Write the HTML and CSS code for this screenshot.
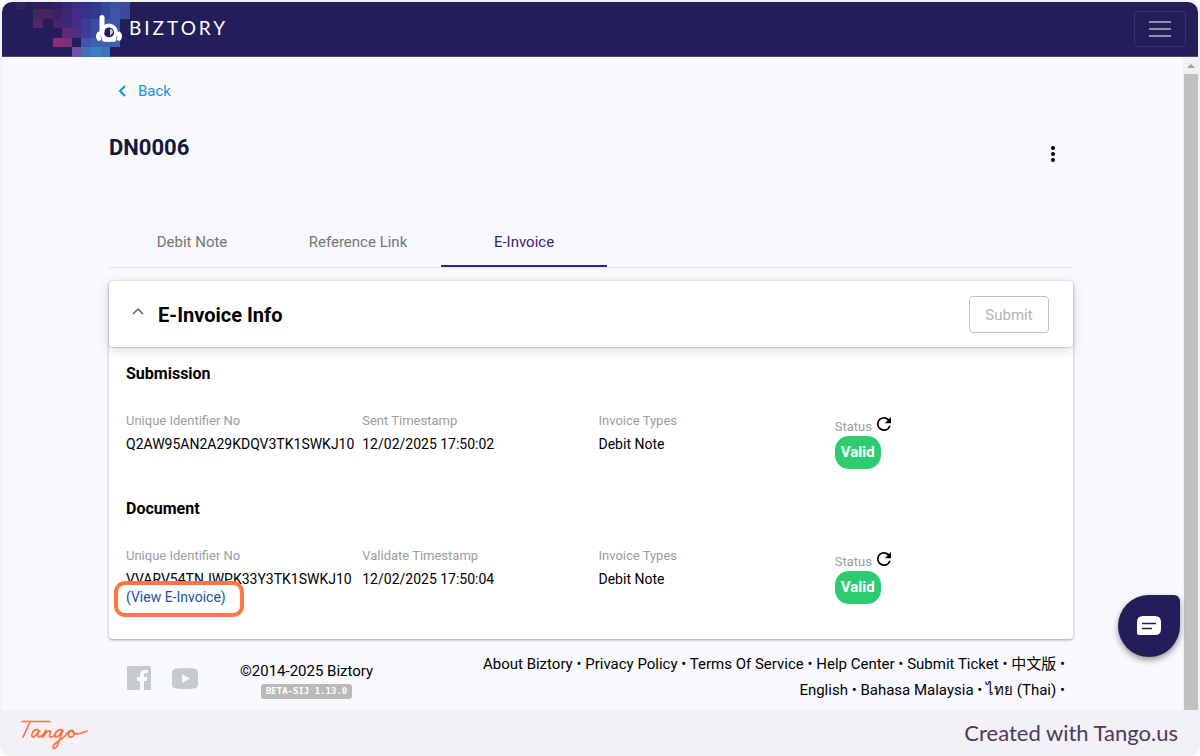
FILE: index.html
```html
<!DOCTYPE html>
<html lang="en">
<head>
<meta charset="utf-8">
<title>DN0006 - Biztory</title>
<link rel="stylesheet" href="styles.css">
</head>
<body>
<div class="frame">
  <div class="app">
    <header class="topbar">
      <a class="brand" href="#" aria-label="Biztory home">
        <svg class="mosaic" width="130" height="55" viewBox="2 2 130 55" aria-hidden="true" shape-rendering="crispEdges">
          <path fill="#2f2563" d="M15 2h10v7H15z"/>
          <path fill="#29215f" d="M33 2h20v7H33z"/>
          <path fill="#2c2265" d="M53 2h9v7h-9z"/>
          <path fill="#34267a" d="M62 2h10v7H62z"/>
          <path fill="#3a2c85" d="M72 2h9v7h-9z"/>
          <path fill="#34308c" d="M81 2h10v7H81z"/>
          <path fill="#2f3a8e" d="M91 2h10v17H91z"/>
          <path fill="#34489b" d="M101 2h9v17h-9z"/>
          <path fill="#434fa6" d="M110 2h10v7h-10z"/>
          <path fill="#3b4a9c" d="M120 2h10v17h-10z"/>
          <path fill="#3c55a8" d="M110 9h10v10h-10z"/>
          <path fill="#44255f" d="M33 9h20v10H33z"/>
          <path fill="#37235f" d="M53 9h9v10h-9z"/>
          <path fill="#3f2773" d="M62 9h10v19H62z"/>
          <path fill="#452d83" d="M72 9h9v19h-9z"/>
          <path fill="#38328c" d="M81 9h10v10H81z"/>
          <path fill="#522662" d="M33 19h10v9H33z"/>
          <path fill="#4a2468" d="M53 19h9v9h-9z"/>
          <path fill="#3c3b96" d="M81 19h10v19H81z"/>
          <path fill="#3b4ba0" d="M91 19h10v19H91z"/>
          <path fill="#3b56a8" d="M101 19h19v19h-19z"/>
          <path fill="#612974" d="M62 28h10v10H62z"/>
          <path fill="#4f2d86" d="M72 28h9v10h-9z"/>
          <path fill="#8e2a78" d="M53 38h9v9h-9z"/>
          <path fill="#7f2d7f" d="M62 38h10v9H62z"/>
          <path fill="#3f55a5" d="M81 38h10v9H81z"/>
          <path fill="#3e62b0" d="M91 38h29v9H91z"/>
          <path fill="#6f50a6" d="M72 47h9v10h-9z"/>
          <path fill="#4270b4" d="M81 47h10v10H81z"/>
          <path fill="#3b80c0" d="M91 47h10v10H91z"/>
          <path fill="#3b76b9" d="M101 47h9v10h-9z"/>
        </svg>
        <svg class="mark" width="28" height="28" viewBox="0 0 28 28" aria-hidden="true">
          <circle cx="14" cy="18.500" r="6" fill="#231e5a"/>
          <g fill="none" stroke="#fff" stroke-linecap="round">
            <path stroke-width="5" d="M7 3.500V18"/>
            <circle cx="14" cy="18.500" r="7" stroke-width="4"/>
            <path stroke-width="4.500" d="M4 20Q2.500 22 4 24.500M24 20Q25.500 22 24 24.500M9 25.500H19"/>
          </g>
          <path fill="#b9cdec" d="M15 14.500q3 1 3 4l-3 3.500z"/>
        </svg>
        <span class="wordmark">BIZTORY</span>
      </a>
      <button class="menu-button" type="button" aria-label="Open menu"><span></span><span></span><span></span></button>
    </header>
    <div class="viewport">
      <main class="content">
        <a class="back" href="#"><svg width="8" height="12" viewBox="0 0 8 12" aria-hidden="true"><path d="M7 1L2 6l5 5" fill="none" stroke="currentColor" stroke-width="2"/></svg>Back</a>
        <div class="title-row">
          <h1>DN0006</h1>
          <button class="more" type="button" aria-label="More actions"><i></i><i></i><i></i></button>
        </div>
        <nav class="tabs">
          <a class="tab" href="#">Debit Note</a>
          <a class="tab" href="#">Reference Link</a>
          <a class="tab tab-active" href="#">E-Invoice</a>
        </nav>
        <section class="card">
          <div class="card-head">
            <svg width="12" height="8" viewBox="0 0 12 8" aria-hidden="true"><path d="M1 7l5-5 5 5" fill="none" stroke="#666" stroke-width="1.500"/></svg>
            <h2>E-Invoice Info</h2>
            <button class="submit" type="button" disabled>Submit</button>
          </div>
          <div class="card-body">
            <h3>Submission</h3>
            <dl class="fields">
              <div><dt>Unique Identifier No</dt><dd>Q2AW95AN2A29KDQV3TK1SWKJ10</dd></div>
              <div><dt>Sent Timestamp</dt><dd>12/02/2025 17:50:02</dd></div>
              <div><dt>Invoice Types</dt><dd>Debit Note</dd></div>
              <div class="status"><dt>Status <button type="button" class="refresh" aria-label="Refresh status"><svg width="14" height="14" viewBox="4 4 16 16" aria-hidden="true"><path d="M17.650 6.350A7.960 7.960 0 0 0 12 4a8 8 0 1 0 7.730 10h-2.080A6 6 0 1 1 12 6c1.660 0 3.140.690 4.220 1.780L13 11h7V4z"/></svg></button></dt><dd><span class="pill">Valid</span></dd></div>
            </dl>
            <h3>Document</h3>
            <dl class="fields">
              <div><dt>Unique Identifier No</dt><dd>VVARV54TNJWPK33Y3TK1SWKJ10<br><span class="link-spot"><a href="#">(View E-Invoice)</a></span></dd></div>
              <div><dt>Validate Timestamp</dt><dd>12/02/2025 17:50:04</dd></div>
              <div><dt>Invoice Types</dt><dd>Debit Note</dd></div>
              <div class="status"><dt>Status <button type="button" class="refresh" aria-label="Refresh status"><svg width="14" height="14" viewBox="4 4 16 16" aria-hidden="true"><path d="M17.650 6.350A7.960 7.960 0 0 0 12 4a8 8 0 1 0 7.730 10h-2.080A6 6 0 1 1 12 6c1.660 0 3.140.690 4.220 1.780L13 11h7V4z"/></svg></button></dt><dd><span class="pill">Valid</span></dd></div>
            </dl>
          </div>
        </section>
        <footer class="site-footer">
          <div class="social">
            <a href="#" aria-label="Facebook"><svg width="24" height="24" viewBox="0 0 24 24"><path fill="#c5cad1" d="M1 0h22a1 1 0 0 1 1 1v22a1 1 0 0 1-1 1h-6v-9h3l.500-4H17V9q0-2 2-2h2V4h-3q-5 0-5 5v2h-3v4h3v9H1a1 1 0 0 1-1-1V1a1 1 0 0 1 1-1z"/></svg></a>
            <a href="#" aria-label="YouTube"><svg width="26" height="21" viewBox="0 0 26 21"><path fill="#c5cad1" fill-rule="evenodd" d="M4 .500Q13-.500 22 .500q4 .500 4 4.500v11q0 4-4 4.500-9 1-18 0Q0 20 0 16V5Q0 1 4 .500zM10 6v9l8-4.500z"/></svg></a>
          </div>
          <div class="copyright"><span>©2014-2025 Biztory</span><span class="version">BETA-SIJ 1.13.0</span></div>
          <p class="links"><a href="#">About Biztory</a> • <a href="#">Privacy Policy</a> • <a href="#">Terms Of Service</a> • <a href="#">Help Center</a> • <a href="#">Submit Ticket</a> • <a href="#" lang="zh">中文版</a> • <a href="#">English</a> • <a href="#">Bahasa Malaysia</a> • <a href="#" lang="th">ไทย (Thai)</a> •</p>
        </footer>
      </main>
      <div class="scrollbar" aria-hidden="true"><span class="scroll-up"></span><span class="scroll-thumb"></span></div>
      <button class="chat" type="button" aria-label="Open chat"><svg width="24" height="20" viewBox="0 0 24 20" aria-hidden="true"><path fill="#fff" d="M6 0h12q6 0 6 6v7q0 6-6 6H2q-2 0-2-2V6q0-6 6-6z"/><path d="M5 7.500h14M5 12.500h10" stroke="#231e5a" stroke-width="1.500"/></svg></button>
    </div>
  </div>
  <div class="credit">
    <svg width="68" height="30" viewBox="0 0 68 30" role="img" aria-label="Tango"><path d="M1 1.500H29M9 2L2 17M19 11c-3-3-7-1-8 3s2 4 4 1l3-4c-2 4-2 6 0 6 3 0 5-3 7-7l-3 7c3-5 5-7 7-6s-2 5 0 6 5-2 6-4c1-3 5-4 7-2M42 11c-3-3-7 0-8 3-1 4 3 4 5 0l3-4-5 14c-1 4-5 6-5 3 0-4 8-6 13-12 2-4 5-5 7-4 3 2 0 7-3 6s-1-6 2-7c1 5 6 5 15 1" fill="none" stroke="#ff7240" stroke-width="1.700" stroke-linecap="round" stroke-linejoin="round"/></svg>
    <span>Created with Tango.us</span>
  </div>
</div>
</body>
</html>
```
FILE: styles.css
```css
* { box-sizing: border-box; }
body { margin: 0; background: #fff; font-family: Roboto, "Noto Sans CJK SC", sans-serif; font-size: 15px; line-height: 20px; color: #000; }
h1, h2, h3, p, dl, dd { margin: 0; }
a { color: inherit; text-decoration: none; }
button { font: inherit; margin: 0; }
.frame { min-height: 100vh; display: flex; flex-direction: column; background: #f3f1f6; border-radius: 10px; padding: 2px 2px 0; }
.app { flex: 1; display: flex; flex-direction: column; border-radius: 10px 10px 0 0; overflow: hidden; background: #f8f9fd; }
.topbar { height: 55px; display: flex; align-items: center; justify-content: space-between; background: #231e5a; border-bottom: 1px solid #4a4673; padding-right: 12px; }
.brand { display: flex; align-items: center; color: #fff; }
.mark { margin: 0 0 2px -37px; }
.wordmark { font-family: Lato, sans-serif; font-size: 19px; letter-spacing: 3px; margin: 0 0 3px 6px; }
.menu-button { width: 52px; height: 36px; display: flex; flex-direction: column; align-items: center; justify-content: center; gap: 5px; background: none; border: 1px solid #37326a; border-radius: 4px; padding: 0; }
.menu-button span { width: 22px; height: 2px; background: #918fad; }
.viewport { flex: 1; display: flex; position: relative; }
.content { flex: 1; min-width: 0; padding: 24px 110px 0 107px; }
.back { display: inline-flex; align-items: center; gap: 12px; margin-left: 9px; color: #1296db; }
.title-row { display: flex; align-items: flex-start; justify-content: space-between; margin-top: 26px; padding-right: 16px; height: 60px; }
h1 { font-size: 22px; line-height: 40px; font-weight: 700; color: #14173a; }
.more { display: flex; flex-direction: column; gap: 2px; background: none; border: 0; padding: 18px 2px; }
.more i { width: 4px; height: 4px; border-radius: 50%; background: #000; }
.tabs { display: flex; margin-top: 30px; border-bottom: 1px solid #e2e3e8; }
.tab { width: 166px; padding: 14px 0 13px; text-align: center; color: #767676; border-bottom: 2px solid transparent; }
.tab-active { color: #3c2178; border-color: #3c2178; }
.card { margin-top: 13px; background: #fff; border-radius: 4px; box-shadow: 0 1px 3px rgba(0,0,0,.35); }
.card-head { display: flex; align-items: center; padding: 15px 24px 14px 23px; border-radius: 4px; box-shadow: 0 1px 1px rgba(0,0,0,.14), 0 3px 12px rgba(0,0,0,.15); }
.card-head svg { margin-bottom: 8px; }
h2 { font-size: 20px; line-height: 28px; font-weight: 700; margin-left: 14px; flex: 1; }
.submit { height: 37px; width: 80px; border: 1px solid #c4c4c4; border-radius: 4px; background: #fff; color: #b3b3b3; }
.card-body { padding: 17px 2px 33px 17px; }
h3 { font-size: 16px; line-height: 20px; font-weight: 700; }
.fields { display: grid; grid-template-columns: repeat(4, minmax(0, 1fr)); margin: 28px 0 30px; }
.fields + h3 + .fields { margin-bottom: 0; }
.fields dt { font-size: 13px; line-height: 18px; color: #9a9da4; margin-bottom: 5px; }
.fields dd { font-size: 14px; line-height: 18px; white-space: nowrap; }
.fields .status dt { display: flex; align-items: flex-end; gap: 5px; height: 24px; margin: 0; }
.refresh { display: flex; border: 0; background: none; padding: 0 0 5px; }
.pill { display: inline-block; padding: 7px 6px; border-radius: 14px; font-size: 15px; line-height: 19px; color: #fff; background: #2ecc71; font-weight: 700; }
.link-spot { position: relative; color: #1f4e9e; }
.link-spot::before { content: ""; position: absolute; inset: -8px -18px -12px -12px; border: 4px solid #ff7844; border-radius: 11px; background: #fff; }
.link-spot a { position: relative; }
.site-footer { display: flex; align-items: flex-start; padding-top: 12px; }
.social { display: flex; align-items: center; gap: 21px; padding: 15px 0 0 18px; }
.social a { display: flex; }
.copyright { display: flex; flex-direction: column; align-items: center; margin: 10px 0 0 42px; }
.version { font: 700 9px/15px "DejaVu Sans Mono", monospace; color: #fff; background: #b9b9b9; border-radius: 3px; padding: 0 5px; margin-top: 3px; }
.links { flex: 1; text-align: right; line-height: 26px; padding-right: 8px; margin-left: 90px; }
.scrollbar { width: 15px; display: flex; flex-direction: column; background: #f1f1f1; }
.scroll-up { height: 17px; display: flex; justify-content: center; align-items: center; }
.scroll-up::before { content: ""; border: 4px solid transparent; border-top: 0; border-bottom-color: #a0a0a0; }
.scroll-thumb { flex: 1; background: #c1c1c1; margin-left: 1px; }
.chat { position: absolute; right: 18px; bottom: 53px; width: 62px; height: 62px; display: flex; align-items: center; justify-content: center; border: 0; border-radius: 50% 6px 50% 50%; background: #231e5a; box-shadow: 0 3px 6px rgba(0,0,0,.4); }
.credit { height: 46px; display: flex; align-items: center; justify-content: space-between; padding: 0 20px 0 19px; font-family: Lato, sans-serif; font-size: 22px; color: #4b3a5c; }
.credit svg { margin-top: 4px; }
```
